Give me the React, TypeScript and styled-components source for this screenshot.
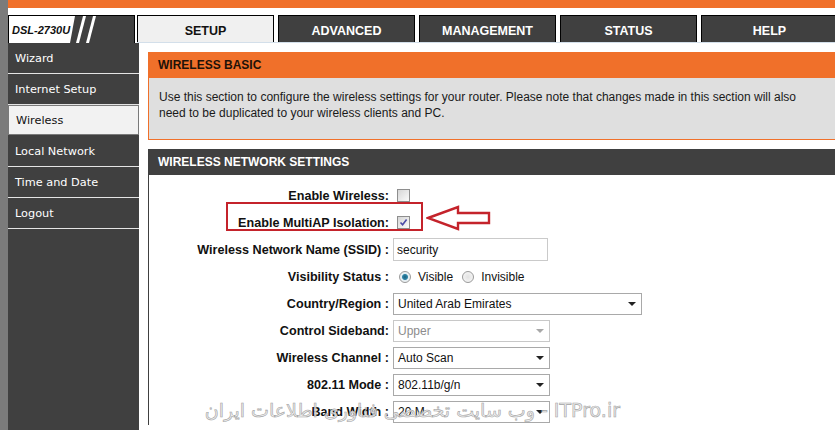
import React from 'react';
import styled, { createGlobalStyle } from 'styled-components';

const ORANGE = '#f0702a';
const DARK = '#404040';

const GlobalStyle = createGlobalStyle`
  html, body {
    margin: 0;
    padding: 0;
    background: #fff;
    overflow: hidden;
  }
  body {
    font-family: "Liberation Sans", Arial, sans-serif;
    color: #111;
  }
`;

const Page = styled.div`
  position: relative;
  display: flex;
  width: 835px;
  height: 430px;
  overflow: hidden;
`;

const GrayStrip = styled.div`
  width: 8px;
  flex-shrink: 0;
  background: #7b7b7b;
`;

const Main = styled.div`
  flex: 1;
  min-width: 0;
  display: flex;
  flex-direction: column;
`;

const TopBar = styled.div`
  height: 8px;
  background: ${ORANGE};
  margin-bottom: 7px;
`;

const Header = styled.div`
  display: flex;
  height: 28px;
`;

const Logo = styled.div`
  width: 127px;
  flex-shrink: 0;
  box-sizing: border-box;
  border: 1px solid #000;
  border-bottom: none;
  display: flex;
  align-items: stretch;
  background: #fff;
`;

const LogoText = styled.span`
  padding-left: 3px;
  width: 58px;
  display: flex;
  align-items: center;
  font-size: 11px;
  font-weight: bold;
  font-style: italic;
  color: #111;
  white-space: nowrap;
`;

const TabList = styled.div`
  flex: 1;
  display: flex;
  gap: 4px;
  margin-left: 2px;
  border-bottom: 1px solid #d3dfea;
`;

const Tab = styled.div<{ $active?: boolean }>`
  width: 137px;
  flex-shrink: 0;
  box-sizing: border-box;
  border: 1px solid #000;
  border-bottom: none;
  padding-top: 4px;
  display: flex;
  align-items: center;
  justify-content: center;
  background: ${p => (p.$active ? '#f0f0f0' : DARK)};
  color: ${p => (p.$active ? '#111' : '#fff')};
  font-size: 12.5px;
  font-weight: bold;
`;

const Body = styled.div`
  flex: 1;
  display: flex;
`;

const Sidebar = styled.nav`
  width: 131px;
  flex-shrink: 0;
  background: ${DARK};
`;

const NavItem = styled.div<{ $active?: boolean }>`
  height: 31px;
  box-sizing: border-box;
  display: flex;
  align-items: center;
  padding-left: 7px;
  font-family: "DejaVu Sans", Verdana, sans-serif;
  font-size: 11.3px;
  color: ${p => (p.$active ? '#111' : '#fff')};
  background: ${p => (p.$active ? '#f2f2f2' : 'transparent')};
  border-bottom: 1px solid #e4e4e4;
  ${p => p.$active && `border: 1px solid #7a7a7a; margin-bottom: 1px; height: 30px;`}
`;

const Content = styled.main`
  flex: 1;
  min-width: 0;
  padding: 9px 0 0 9px;
  display: flex;
  flex-direction: column;
  gap: 9px;
`;

const Section = styled.section`
  width: calc(100% + 30px);
`;

const SectionTitle = styled.div<{ $tone: 'orange' | 'dark' }>`
  height: 26px;
  display: flex;
  align-items: center;
  padding-left: 10px;
  background: ${p => (p.$tone === 'orange' ? ORANGE : DARK)};
  color: ${p => (p.$tone === 'orange' ? '#1e1208' : '#fff')};
  font-size: 12px;
  font-weight: bold;
`;

const InfoBody = styled.div`
  background: #dfdfdf;
  border: 1px solid ${ORANGE};
  border-top: none;
  padding: 11px 40px 18px 10px;
  font-size: 12px;
  line-height: 16px;
  color: #1a1a1a;
`;

const FormBody = styled.div`
  border-left: 1px solid ${DARK};
  padding-top: 7px;
  display: grid;
  grid-template-columns: 240px 1fr;
  column-gap: 4px;
  grid-auto-rows: 27px;
  align-items: center;
`;

const Label = styled.div`
  position: relative;
  text-align: right;
  font-size: 12.6px;
  font-weight: bold;
  color: #111;
  white-space: nowrap;
`;

const Control = styled.div`
  display: flex;
  align-items: center;
  font-size: 12px;
`;

const Highlight = styled.div`
  position: absolute;
  top: -14px;
  right: -34px;
  width: 197px;
  height: 29px;
  box-sizing: border-box;
  border: 2px solid #c4232b;
  pointer-events: none;
`;

const ArrowMark = styled.svg`
  position: absolute;
  top: -12px;
  right: -103px;
`;

const CheckBox = styled.span<{ $checked?: boolean }>`
  width: 13px;
  height: 13px;
  margin-left: 4px;
  box-sizing: border-box;
  border: 1px solid #8e8e8e;
  background: linear-gradient(135deg, #d6d6d6, #fbfbfb);
  display: inline-flex;
  align-items: center;
  justify-content: center;
`;

const TextInput = styled.input`
  width: 155px;
  height: 23px;
  box-sizing: border-box;
  border: 1px solid #cacaca;
  padding: 0 3px;
  font-family: "Liberation Sans", Arial, sans-serif;
  font-size: 12px;
  color: #111;
  outline: none;
`;

const Radio = styled.span<{ $checked?: boolean }>`
  width: 12px;
  height: 12px;
  box-sizing: border-box;
  border-radius: 50%;
  border: 1px solid #9a9a9a;
  margin-left: ${p => (p.$checked ? '6px' : '9px')};
  background: ${p =>
    p.$checked
      ? 'radial-gradient(circle, #1d5f7c 0, #2f86a8 2.5px, #e4eef2 3.5px, #f4f4f4 6px)'
      : 'radial-gradient(circle, #e2e2e2 0, #f6f6f6 6px)'};
`;

const RadioText = styled.span`
  margin-left: 7px;
  color: #111;
`;

const Select = styled.div<{ $width: number; $disabled?: boolean }>`
  width: ${p => p.$width}px;
  height: 22px;
  box-sizing: border-box;
  border: 1px solid ${p => (p.$disabled ? '#c8c8c8' : '#a9a9a9')};
  padding: 0 5px 0 4px;
  display: flex;
  align-items: center;
  justify-content: space-between;
  color: ${p => (p.$disabled ? '#8c8c8c' : '#111')};
  background: #fff;
`;

const Caret = styled.span<{ $disabled?: boolean }>`
  width: 0;
  height: 0;
  border-left: 4px solid transparent;
  border-right: 4px solid transparent;
  border-top: 4px solid ${p => (p.$disabled ? '#a8a8a8' : '#222')};
`;

const Watermark = styled.div`
  position: absolute;
  right: 215px;
  top: 399px;
  direction: rtl;
  font-family: "DejaVu Sans", sans-serif;
  font-size: 19px;
  color: rgba(236, 236, 236, 0.9);
  -webkit-text-stroke: 0.6px #a4a4a4;
  white-space: nowrap;
  pointer-events: none;
`;

const LogoMark = () => (
  <svg width="64" height="27" viewBox="0 0 64 27">
    <polygon points="0,27 5,0 64,0 64,27" fill={DARK} />
    <polygon points="6,27 13,0 16,0 9,27" fill="#fff" />
    <polygon points="16,27 23,0 26,0 19,27" fill="#fff" />
  </svg>
);

const tabs = ['SETUP', 'ADVANCED', 'MANAGEMENT', 'STATUS', 'HELP'];
const menu = ['Wizard', 'Internet Setup', 'Wireless', 'Local Network', 'Time and Date', 'Logout'];

const selects = [
  { label: 'Country/Region :', value: 'United Arab Emirates', width: 249 },
  { label: 'Control Sideband:', value: 'Upper', width: 157, disabled: true },
  { label: 'Wireless Channel :', value: 'Auto Scan', width: 157 },
  { label: '802.11 Mode :', value: '802.11b/g/n', width: 157 },
  { label: 'Band Width :', value: '20 M', width: 157 },
];

export default function App() {
  return (
    <Page>
      <GlobalStyle />
      <GrayStrip />
      <Main>
        <TopBar />
        <Header>
          <Logo>
            <LogoText>DSL-2730U</LogoText>
            <LogoMark />
          </Logo>
          <TabList>
            {tabs.map(t => (
              <Tab key={t} $active={t === 'SETUP'}>{t}</Tab>
            ))}
          </TabList>
        </Header>
        <Body>
          <Sidebar>
            {menu.map(m => (
              <NavItem key={m} $active={m === 'Wireless'}>{m}</NavItem>
            ))}
          </Sidebar>
          <Content>
            <Section>
              <SectionTitle $tone="orange">WIRELESS BASIC</SectionTitle>
              <InfoBody>
                Use this section to configure the wireless settings for your router. Please note that changes made in this section will also
                need to be duplicated to your wireless clients and PC.
              </InfoBody>
            </Section>
            <Section>
              <SectionTitle $tone="dark">WIRELESS NETWORK SETTINGS</SectionTitle>
              <FormBody>
                <Label>Enable Wireless:</Label>
                <Control><CheckBox /></Control>

                <Label>
                  Enable MultiAP Isolation:
                  <Highlight />
                  <ArrowMark width="66" height="28" viewBox="0 0 66 28">
                    <path d="M2 14 L32 3 L32 9 L63 9 L63 19 L32 19 L32 25 Z"
                          fill="#fff" stroke="#c4232b" strokeWidth="2.4" strokeLinejoin="miter" />
                  </ArrowMark>
                </Label>
                <Control>
                  <CheckBox $checked>
                    <svg width="9" height="9" viewBox="0 0 9 9">
                      <path d="M1.5 4.5 L3.6 6.8 L7.6 1.4" fill="none" stroke="#4a4aa6" strokeWidth="1.6" />
                    </svg>
                  </CheckBox>
                </Control>

                <Label>Wireless Network Name (SSID) :</Label>
                <Control><TextInput readOnly value="security" /></Control>

                <Label>Visibility Status :</Label>
                <Control>
                  <Radio $checked />
                  <RadioText>Visible</RadioText>
                  <Radio />
                  <RadioText>Invisible</RadioText>
                </Control>

                {selects.map(s => (
                  <React.Fragment key={s.label}>
                    <Label>{s.label}</Label>
                    <Control>
                      <Select $width={s.width} $disabled={s.disabled}>
                        <span>{s.value}</span>
                        <Caret $disabled={s.disabled} />
                      </Select>
                    </Control>
                  </React.Fragment>
                ))}
              </FormBody>
            </Section>
          </Content>
        </Body>
      </Main>
      <Watermark>ITPro.ir - وب سایت تخصصی فناوری اطلاعات ایران</Watermark>
    </Page>
  );
}
